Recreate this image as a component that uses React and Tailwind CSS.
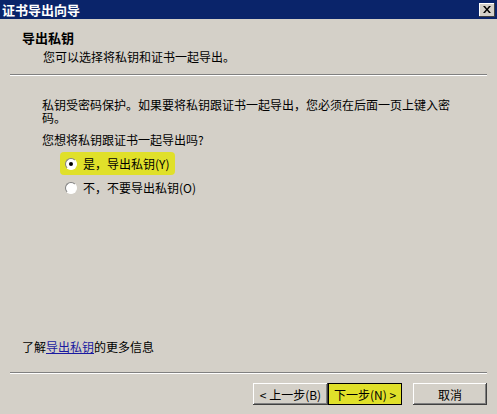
import React from 'react';

const font = "font-[family-name:'Noto_Sans_CJK_SC','SimSun',sans-serif]";

const btn3d =
  'h-[22px] flex items-center justify-center bg-[#d4d0c8] shadow-[inset_-1px_-1px_#404040,inset_1px_1px_#ffffff,inset_-2px_-2px_#808080,inset_2px_2px_#d4d0c8]';

const Radio = ({ checked }) => (
  <span className="w-[12px] h-[12px] rounded-full bg-white border border-[#808080] border-r-white border-b-white flex items-center justify-center shrink-0">
    {checked && <span className="w-[4px] h-[4px] rounded-full bg-black" />}
  </span>
);

export default function App() {
  return (
    <div className={`w-[497px] h-[414px] bg-[#d4d0c8] flex flex-col text-[12px] leading-[13px] text-black overflow-hidden ${font}`}>
      {/* Title bar */}
      <div className="h-[19px] bg-[#0a246a] flex items-center justify-between pl-[2px] pr-[2px]">
        <span className="text-white font-bold text-[13px] leading-[13px]">证书导出向导</span>
        <span className="w-[16px] h-[14px] bg-[#d4d0c8] shadow-[inset_-1px_-1px_#404040,inset_1px_1px_#ffffff] flex items-center justify-center">
          <svg width="8" height="7" viewBox="0 0 8 7">
            <path d="M0 0h2l2 2.5L6 0h2L5 3.5 8 7H6L4 4.5 2 7H0l3-3.5z" fill="#000" />
          </svg>
        </span>
      </div>

      {/* Header */}
      <div className="pl-[22px] mt-[12px] font-bold text-[13px]">导出私钥</div>
      <div className="pl-[43px] mt-[6px]">您可以选择将私钥和证书一起导出。</div>
      <div className="mx-[10px] mt-[11px] h-[2px] border-t border-[#808080] border-b border-b-white" />

      {/* Body */}
      <div className="pl-[42px] mt-[22px]">
        <p className="w-[412px]">私钥受密码保护。如果要将私钥跟证书一起导出，您必须在后面一页上键入密码。</p>
        <p className="mt-[9px]">您想将私钥跟证书一起导出吗?</p>
        <div className="ml-[18px] mt-[6px] flex flex-col items-start gap-[1px]">
          <div className="h-[23px] px-[5px] bg-[#e0e02a] rounded-[4px] flex items-center gap-[6px]">
            <Radio checked />
            <span>是，导出私钥(Y)</span>
          </div>
          <div className="h-[23px] px-[5px] flex items-center gap-[6px]">
            <Radio />
            <span>不，不要导出私钥(O)</span>
          </div>
        </div>
      </div>

      <div className="flex-1" />

      {/* Footer */}
      <div className="pl-[22px]">
        了解<span className="text-[#1a1aa0] underline">导出私钥</span>的更多信息
      </div>
      <div className="mx-[10px] mt-[19px] h-[2px] border-t border-[#808080] border-b border-b-white" />
      <div className="flex justify-end pr-[10px] mt-[9px] mb-[9px]">
        <div className={`${btn3d} w-[75px]`}>&lt; 上一步(B)</div>
        <div className="w-[74px] h-[22px] flex items-center justify-center bg-[#e0e02a] border border-black">下一步(N) &gt;</div>
        <div className={`${btn3d} w-[74px] ml-[11px]`}>取消</div>
      </div>
    </div>
  );
}
